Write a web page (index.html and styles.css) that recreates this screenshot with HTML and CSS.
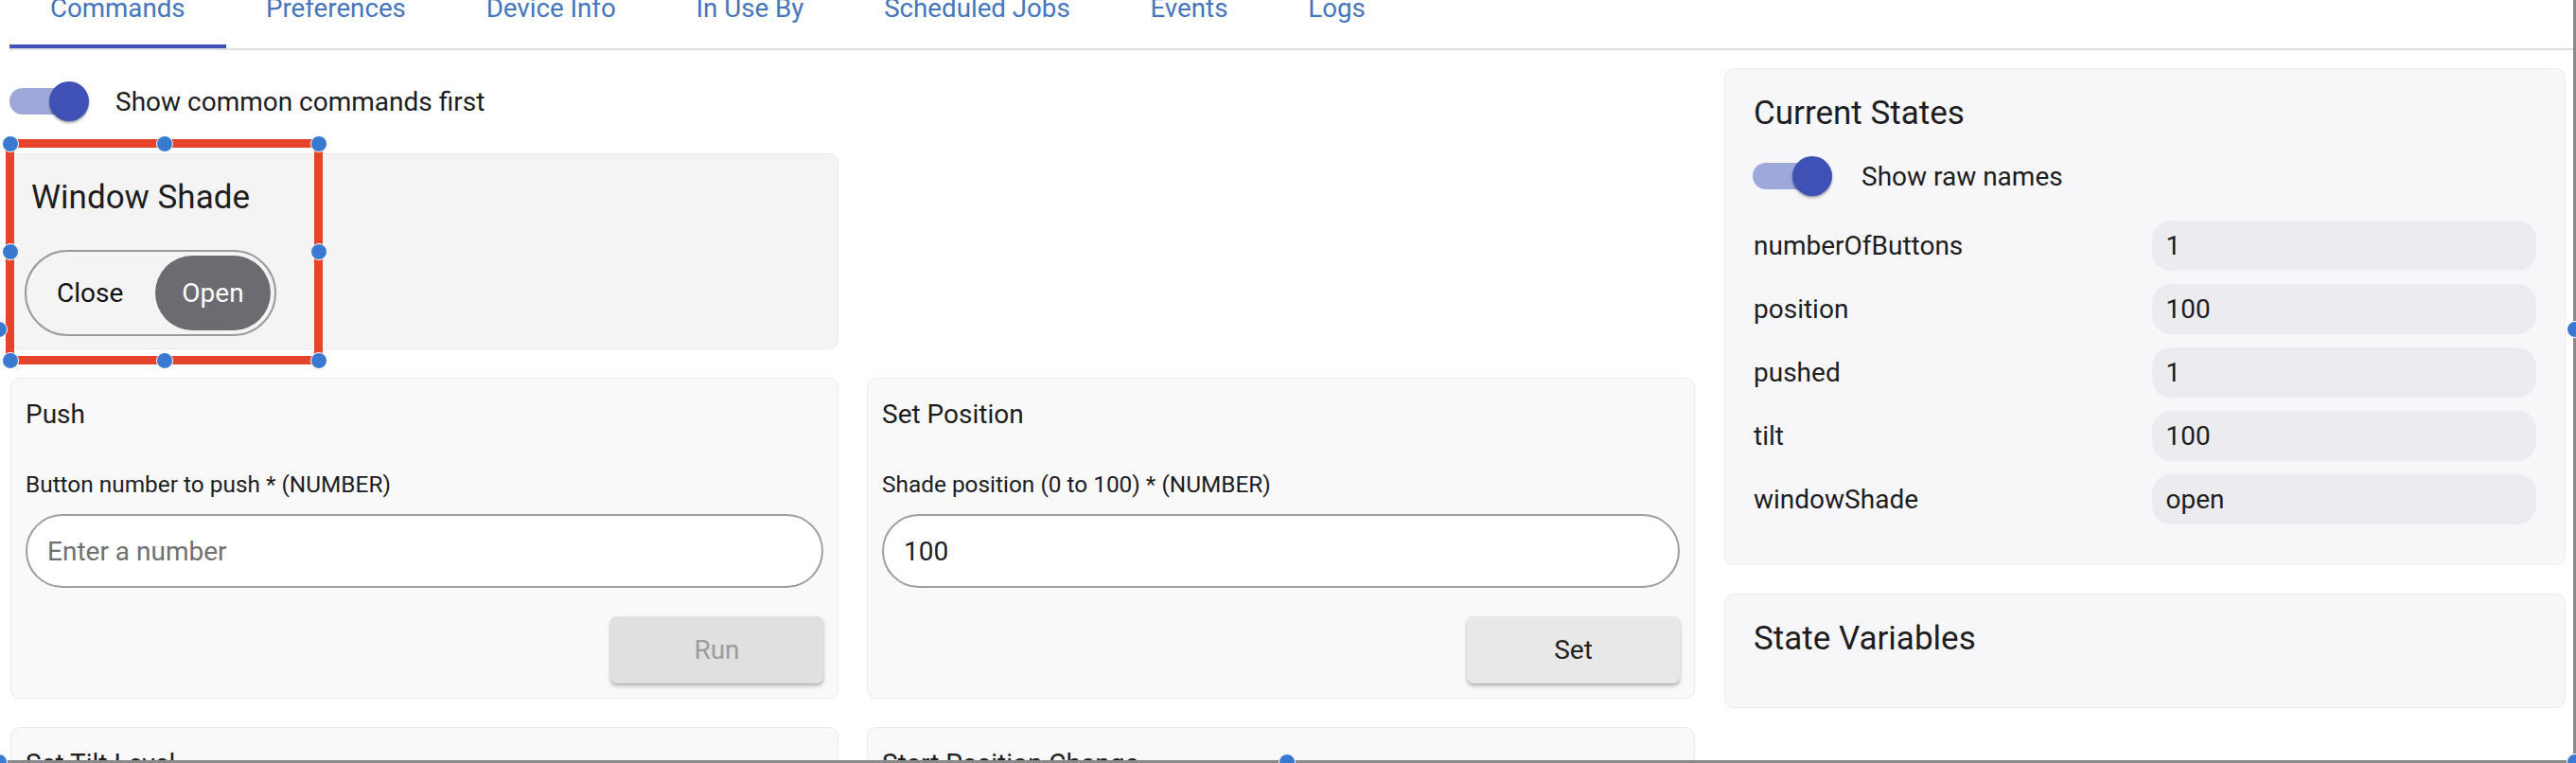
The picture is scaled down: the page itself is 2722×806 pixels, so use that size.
FILE: index.html
```html
<!DOCTYPE html>
<html lang="en">
<head>
<meta charset="utf-8">
<title>Device - Commands</title>
<link rel="stylesheet" href="styles.css">
</head>
<body>
<div class="page">
  <nav class="tabs">
    <div class="tab active">Commands</div>
    <div class="tab">Preferences</div>
    <div class="tab">Device Info</div>
    <div class="tab">In Use By</div>
    <div class="tab">Scheduled Jobs</div>
    <div class="tab">Events</div>
    <div class="tab">Logs</div>
  </nav>

  <div class="main">
    <section class="commands">
      <div class="switch-row top-switch">
        <span class="switch"><span class="track"></span><span class="thumb"></span></span>
        <span>Show common commands first</span>
      </div>

      <div class="cmd-grid">
        <div class="card shade-card">
          <h2 class="shade-title">Window Shade</h2>
          <div class="segmented">
            <span class="seg">Close</span>
            <span class="seg on">Open</span>
          </div>
          <div class="select-box">
            <span class="handle h-tl"></span><span class="handle h-tc"></span><span class="handle h-tr"></span>
            <span class="handle h-ml"></span><span class="handle h-mr"></span>
            <span class="handle h-bl"></span><span class="handle h-bc"></span><span class="handle h-br"></span>
          </div>
        </div>
        <div class="empty-cell"></div>

        <div class="card cmd-card">
          <h3 class="cmd-title">Push</h3>
          <div class="field-label">Button number to push * (NUMBER)</div>
          <input class="num-input" type="text" placeholder="Enter a number">
          <div class="btn-row"><button class="btn btn-disabled">Run</button></div>
        </div>

        <div class="card cmd-card">
          <h3 class="cmd-title">Set Position</h3>
          <div class="field-label">Shade position (0 to 100) * (NUMBER)</div>
          <input class="num-input" type="text" value="100">
          <div class="btn-row"><button class="btn">Set</button></div>
        </div>

        <div class="card cmd-card cut-card">
          <h3 class="cmd-title">Set Tilt Level</h3>
        </div>
        <div class="card cmd-card cut-card">
          <h3 class="cmd-title">Start Position Change</h3>
        </div>
      </div>
    </section>

    <aside class="states">
      <div class="card state-card">
        <h2 class="panel-title">Current States</h2>
        <div class="switch-row state-switch">
          <span class="switch"><span class="track"></span><span class="thumb"></span></span>
          <span>Show raw names</span>
        </div>
        <div class="state-grid">
          <div class="state-name">numberOfButtons</div><div class="state-val">1</div>
          <div class="state-name">position</div><div class="state-val">100</div>
          <div class="state-name">pushed</div><div class="state-val">1</div>
          <div class="state-name">tilt</div><div class="state-val">100</div>
          <div class="state-name">windowShade</div><div class="state-val">open</div>
        </div>
      </div>
      <div class="card state-card vars-card">
        <h2 class="panel-title">State Variables</h2>
      </div>
    </aside>
  </div>
</div>

<div class="frame">
  <span class="handle f-tl"></span><span class="handle f-tc"></span><span class="handle f-tr"></span>
  <span class="handle f-ml"></span><span class="handle f-mr"></span>
  <span class="handle f-bl"></span><span class="handle f-bc"></span><span class="handle f-br"></span>
</div>
</body>
</html>
```

FILE: styles.css
```css
* { box-sizing: border-box; }

html, body {
  margin: 0;
  padding: 0;
}

body {
  width: 2722px;
  height: 806px;
  overflow: hidden;
  position: relative;
  background: #ffffff;
  color: #1d1d1f;
  font-family: Roboto, "Noto Sans", "Liberation Sans", Arial, sans-serif;
}

.page {
  padding-left: 11px;
}

/* ---------- tabs ---------- */
.tabs {
  display: flex;
  margin-left: -1px;
  border-bottom: 2px solid #dedede;
}

.tab {
  font-size: 27.7px;
  line-height: 18px;
  padding: 0 42.4px 29px;
  color: #4575bb;
  border-bottom: 4px solid transparent;
  white-space: nowrap;
}

.tab.active {
  border-bottom-color: #3f51b5;
  padding: 0 43px 29px;
}

/* ---------- layout ---------- */
.main {
  display: flex;
  align-items: flex-start;
  gap: 31px;
}

.commands {
  width: 1780px;
  flex: none;
  padding-top: 33px;
}

.states {
  width: 889px;
  flex: none;
  padding-top: 19px;
  display: flex;
  flex-direction: column;
  gap: 30px;
}

/* ---------- switch ---------- */
.switch-row {
  display: flex;
  align-items: center;
  gap: 28px;
  font-size: 28px;
  color: #1d1d1f;
}

.top-switch {
  margin-left: -1px;
}

.switch {
  position: relative;
  flex: none;
  width: 84px;
  height: 42px;
}

.switch .track {
  position: absolute;
  left: 0;
  top: 7px;
  width: 70px;
  height: 28px;
  border-radius: 14px;
  background: #9fa8da;
}

.switch .thumb {
  position: absolute;
  left: 42px;
  top: 0;
  width: 42px;
  height: 42px;
  border-radius: 50%;
  background: #3f51b5;
  box-shadow: 0 2px 3px rgba(0, 0, 0, 0.3), 0 1px 1px rgba(0, 0, 0, 0.15);
}

/* ---------- cards ---------- */
.cmd-grid {
  margin-top: 34px;
  display: grid;
  grid-template-columns: 875px 875px;
  column-gap: 30px;
  row-gap: 30px;
  align-items: start;
}

.card {
  background: #f9f9f9;
  border: 1px solid #e9e9e9;
  border-radius: 10px;
}

.shade-card {
  position: relative;
  background: #f4f4f4;
  padding: 0 15px 13px 14px;
}

.shade-title {
  font-size: 35px;
  font-weight: 400;
  line-height: 41px;
  margin: 24.5px 0 35.5px 7px;
  color: #1d1d1f;
}

.segmented {
  display: inline-flex;
  gap: 6px;
  padding: 4px;
  border: 2px solid #9b9b9b;
  border-radius: 46px;
}

.seg {
  height: 79px;
  line-height: 79px;
  padding: 0 28px;
  font-size: 28px;
  border-radius: 40px;
  color: #111;
}

.seg.on {
  background: #6c6b71;
  color: #ffffff;
}

.cmd-card {
  display: flex;
  flex-direction: column;
  padding: 21px 15px 15px;
}

.cmd-title {
  font-size: 28px;
  font-weight: 400;
  line-height: 33px;
  margin: 0;
  color: #1d1d1f;
}

.field-label {
  margin-top: 42.5px;
  font-size: 24.4px;
  line-height: 29px;
  color: #1d1d1f;
}

.num-input {
  margin-top: 17.5px;
  height: 78px;
  width: 100%;
  border: 2px solid #9e9e9e;
  border-radius: 39px;
  background: #ffffff;
  padding: 0 21px;
  font-family: inherit;
  font-size: 28px;
  color: #1d1d1f;
  outline: none;
}

.num-input::placeholder {
  color: #707070;
}

.btn-row {
  margin-top: 30px;
  display: flex;
  justify-content: flex-end;
}

.btn {
  width: 225px;
  height: 71px;
  border: none;
  border-radius: 7px;
  background: #e8e8e8;
  color: #222;
  font-family: inherit;
  font-size: 28px;
  box-shadow: 0 3px 4px rgba(0, 0, 0, 0.22), 0 1px 2px rgba(0, 0, 0, 0.14);
}

.btn-disabled {
  background: #e0e0e0;
  color: #9c9c9c;
}

.cut-card {
  height: 40px;
  overflow: hidden;
}

/* ---------- states panel ---------- */
.state-card {
  background: #f7f7fa;
  border: 1px solid #ececf0;
  padding: 26px 30px 42px;
}

.vars-card {
  padding-bottom: 52px;
}

.panel-title {
  font-size: 35px;
  font-weight: 400;
  line-height: 41px;
  margin: 0;
  color: #1d1d1f;
}

.state-switch {
  margin-top: 25px;
  margin-left: -1px;
  gap: 31px;
}

.state-grid {
  margin-top: 26px;
  display: grid;
  grid-template-columns: 1fr 1fr;
  column-gap: 14px;
  row-gap: 14px;
  align-items: center;
  font-size: 28px;
}

.state-name {
  color: #1d1d1f;
}

.state-val {
  height: 53px;
  line-height: 53px;
  padding-left: 15px;
  border-radius: 20px;
  background: #ebebf0;
  color: #1d1d1f;
}

/* ---------- selection overlays ---------- */
.select-box {
  position: absolute;
  left: -6px;
  top: -16px;
  width: 335px;
  height: 238px;
  border: 9px solid #e5432b;
  pointer-events: none;
}

.frame {
  position: fixed;
  left: -3px;
  top: -110px;
  width: 2725px;
  height: 916px;
  border: 3px solid #8a8a8a;
  pointer-events: none;
}

.handle {
  position: absolute;
  width: 18px;
  height: 18px;
  border-radius: 50%;
  background: #3a79d0;
  border: 1.5px solid #ffffff;
  transform: translate(-50%, -50%);
}

.h-tl { left: -4.5px; top: -4.5px; }
.h-tc { left: 50%; top: -4.5px; }
.h-tr { left: calc(100% + 4.5px); top: -4.5px; }
.h-ml { left: -4.5px; top: 50%; }
.h-mr { left: calc(100% + 4.5px); top: 50%; }
.h-bl { left: -4.5px; top: calc(100% + 4.5px); }
.h-bc { left: 50%; top: calc(100% + 4.5px); }
.h-br { left: calc(100% + 4.5px); top: calc(100% + 4.5px); }

.f-tl { left: -1.5px; top: -1.5px; }
.f-tc { left: 50%; top: -1.5px; }
.f-tr { left: calc(100% + 1.5px); top: -1.5px; }
.f-ml { left: -1.5px; top: 50%; }
.f-mr { left: calc(100% + 1.5px); top: 50%; }
.f-bl { left: -1.5px; top: calc(100% + 1.5px); }
.f-bc { left: 50%; top: calc(100% + 1.5px); }
.f-br { left: calc(100% + 1.5px); top: calc(100% + 1.5px); }
```
